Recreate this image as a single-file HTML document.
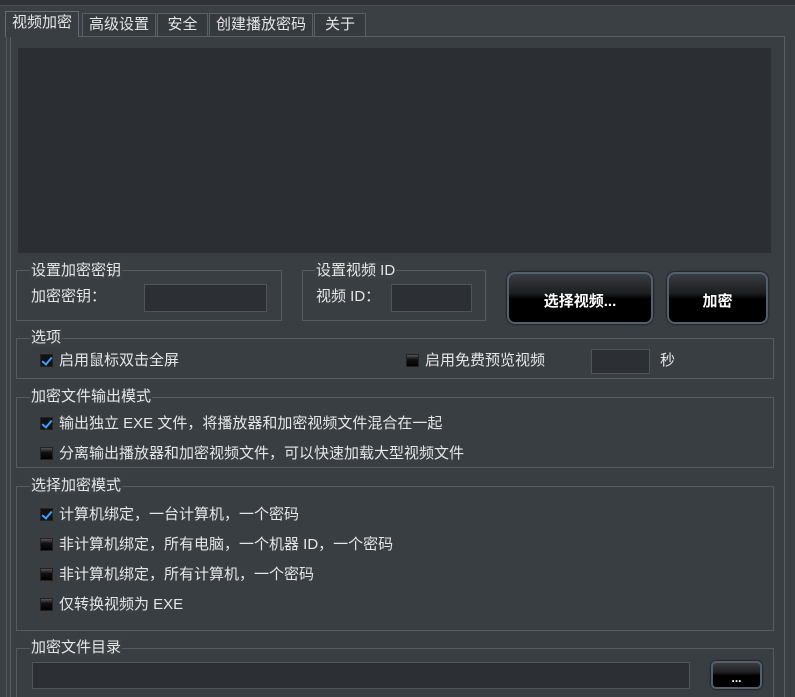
<!DOCTYPE html>
<html><head><meta charset="utf-8"><style>
*{margin:0;padding:0;box-sizing:border-box}
html,body{width:795px;height:697px;overflow:hidden}
body{background:#3b4045;position:relative;font-family:"Liberation Sans","Noto Sans CJK SC",sans-serif;font-size:15px;color:#e6e6e6}
.a{position:absolute}
.t{position:absolute;white-space:nowrap;line-height:17px}
.box{position:absolute;border:1px solid #555b61}
.lbl{position:absolute;background:#3b4045;padding:0 1px;line-height:17px;white-space:nowrap}
.inp{position:absolute;background:#2c3034;border:1px solid #4f555b}
.cb{position:absolute;width:13px;height:13px;background:linear-gradient(#555,#111 40%,#000);border:1px solid #222}
.cb.on{background:#111}
.cb.on::after{content:"";position:absolute;left:3px;top:0px;width:4px;height:8px;border:solid #3aa0ff;border-width:0 2.5px 2.5px 0;transform:rotate(40deg)}
.btn{position:absolute;border-radius:8px;border:2px solid #52606e;background:linear-gradient(#3a3d40 0%,#1c1e20 40%,#000 52%,#000);color:#fff;font-weight:bold;text-align:center;box-shadow:0 0 2px #000}
.tab{position:absolute;top:13px;height:23px;border:1px solid #5a6066;border-bottom:none;background:#353a3f;line-height:22px;text-align:center;font-size:15px;white-space:nowrap}
</style></head><body>
<div class="a" style="left:0;top:0;width:795px;height:6px;background:#2f3337;border-bottom:1px solid #4a4f55"></div>
<div class="a" style="left:10px;top:36px;width:775px;height:670px;border:1px solid #5a6066;background:#393e43"></div>
<div class="a" style="left:6px;top:36px;width:4px;height:670px;border-left:1px solid #4e5459"></div>
<div class="tab" style="left:5px;width:74px;top:11px;height:26px;background:#393e43;border-color:#666c72">视频加密</div>
<div class="tab" style="left:82px;width:74px">高级设置</div>
<div class="tab" style="left:157px;width:51px">安全</div>
<div class="tab" style="left:209px;width:104px">创建播放密码</div>
<div class="tab" style="left:314px;width:52px">关于</div>
<div class="a" style="left:18px;top:48px;width:753px;height:205px;background:#2b2f33"></div>

<div class="box" style="left:16px;top:270px;width:266px;height:51px"></div>
<div class="lbl" style="left:30px;top:262px">设置加密密钥</div>
<div class="t" style="left:31px;top:288px">加密密钥：</div>
<div class="inp" style="left:144px;top:284px;width:123px;height:28px"></div>

<div class="box" style="left:302px;top:270px;width:184px;height:51px"></div>
<div class="lbl" style="left:315px;top:262px">设置视频 ID</div>
<div class="t" style="left:316px;top:288px">视频 ID：</div>
<div class="inp" style="left:391px;top:284px;width:81px;height:28px"></div>

<div class="btn" style="left:507px;top:272px;width:146px;height:52px;line-height:56px">选择视频...</div>
<div class="btn" style="left:667px;top:272px;width:101px;height:52px;line-height:56px">加密</div>

<div class="box" style="left:16px;top:338px;width:758px;height:41px"></div>
<div class="lbl" style="left:30px;top:329px">选项</div>
<div class="cb on" style="left:40px;top:354px"></div>
<div class="t" style="left:59px;top:352px">启用鼠标双击全屏</div>
<div class="cb" style="left:406px;top:354px"></div>
<div class="t" style="left:425px;top:352px">启用免费预览视频</div>
<div class="inp" style="left:591px;top:349px;width:59px;height:25px"></div>
<div class="t" style="left:660px;top:352px">秒</div>

<div class="box" style="left:16px;top:397px;width:758px;height:71px"></div>
<div class="lbl" style="left:30px;top:388px">加密文件输出模式</div>
<div class="cb on" style="left:40px;top:417px"></div>
<div class="t" style="left:59px;top:415px">输出独立 EXE 文件，将播放器和加密视频文件混合在一起</div>
<div class="cb" style="left:40px;top:447px"></div>
<div class="t" style="left:59px;top:445px">分离输出播放器和加密视频文件，可以快速加载大型视频文件</div>

<div class="box" style="left:16px;top:486px;width:758px;height:145px"></div>
<div class="lbl" style="left:30px;top:477px">选择加密模式</div>
<div class="cb on" style="left:40px;top:508px"></div>
<div class="t" style="left:59px;top:506px">计算机绑定，一台计算机，一个密码</div>
<div class="cb" style="left:40px;top:538px"></div>
<div class="t" style="left:59px;top:536px">非计算机绑定，所有电脑，一个机器 ID，一个密码</div>
<div class="cb" style="left:40px;top:568px"></div>
<div class="t" style="left:59px;top:566px">非计算机绑定，所有计算机，一个密码</div>
<div class="cb" style="left:40px;top:598px"></div>
<div class="t" style="left:59px;top:596px">仅转换视频为 EXE</div>

<div class="box" style="left:16px;top:648px;width:758px;height:60px"></div>
<div class="lbl" style="left:30px;top:639px">加密文件目录</div>
<div class="inp" style="left:32px;top:662px;width:658px;height:27px"></div>
<div class="btn" style="left:711px;top:661px;width:51px;height:28px;border-radius:5px;line-height:30px;font-size:12px">...</div>
</body></html>
